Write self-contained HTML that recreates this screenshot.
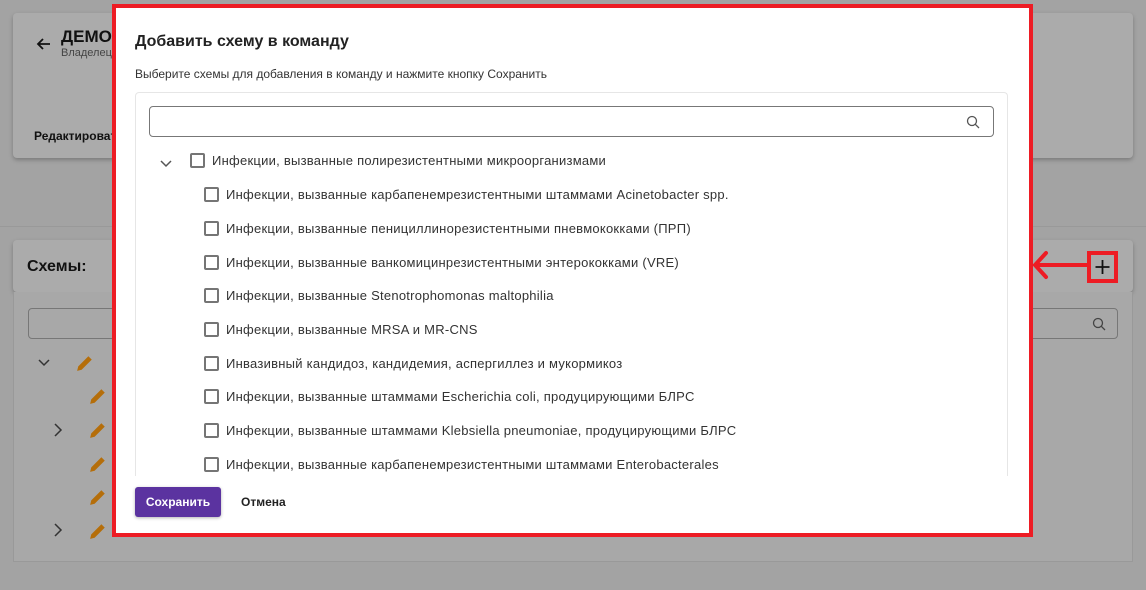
<!DOCTYPE html>
<html><head><meta charset="utf-8"><style>
*{box-sizing:border-box;margin:0;padding:0}
body{width:1146px;height:590px;overflow:hidden;background:#a3a3a3;font-family:"Liberation Sans",Roboto,sans-serif;position:relative;color:#222}
.abs{position:absolute}
.card{background:#ababab;border-radius:4px;box-shadow:0 2px 4px rgba(0,0,0,.25)}
.modal{left:112px;top:4px;width:921px;height:533px;background:#fff;border:4px solid #ed1c24}
.cb{position:absolute;width:15px;height:15px;border:2px solid #757575;border-radius:2px;background:#fff}
.it{position:absolute;font-size:13px;letter-spacing:.25px;color:#333;white-space:nowrap}
.pen{position:absolute;width:18px;height:18px}
</style></head><body>
<div class="abs" style="left:0;top:226px;width:1146px;height:1px;background:#999"></div>
<div class="abs card" style="left:13px;top:13px;width:1120px;height:145px"></div>
<svg class="abs" style="left:35px;top:35px" width="18" height="18" viewBox="0 0 18 18"><path d="M15 9H3M8 4L3 9l5 5" stroke="#111" stroke-width="1.8" fill="none"/></svg>
<div class="abs" style="left:61px;top:27px;font-size:17px;font-weight:bold;color:#111">ДЕМО</div>
<div class="abs" style="left:61px;top:47px;font-size:11px;color:#444">Владелец</div>
<div class="abs" style="left:34px;top:129px;font-size:12px;font-weight:bold;color:#111">Редактировать</div>
<div class="abs card" style="left:13px;top:240px;width:1120px;height:52px"></div>
<div class="abs" style="left:27px;top:258px;font-size:16px;font-weight:bold;color:#111">Схемы:</div>
<div class="abs" style="left:13px;top:292px;width:1120px;height:270px;border:1px solid #999;border-top:none;background:#a8a8a8"></div>
<div class="abs" style="left:28px;top:308px;width:1090px;height:31px;border:1px solid #777;border-radius:4px"></div>
<svg class="abs" style="left:1092px;top:317px" width="14" height="14" viewBox="0 0 14 14"><circle cx="6" cy="6" r="4.5" stroke="#444" stroke-width="1.3" fill="none"/><path d="M9.3 9.3L13 13" stroke="#444" stroke-width="1.3"/></svg>
<svg class="abs" style="left:37px;top:357px" width="14" height="12"><path d="M2 3l5 5 5-5" stroke="#333" stroke-width="1.5" fill="none"/></svg>
<svg class="abs" style="left:52px;top:422px" width="12" height="16"><path d="M3 2l6 6-6 6" stroke="#333" stroke-width="1.5" fill="none"/></svg>
<svg class="abs" style="left:52px;top:522px" width="12" height="16"><path d="M3 2l6 6-6 6" stroke="#333" stroke-width="1.5" fill="none"/></svg>
<svg class="pen" style="left:76px;top:354px" viewBox="0 0 16 16"><path d="M1 15l1-4 9-9 3 3-9 9z" fill="#b56e0a"/></svg>
<svg class="pen" style="left:89px;top:387px" viewBox="0 0 16 16"><path d="M1 15l1-4 9-9 3 3-9 9z" fill="#b56e0a"/></svg>
<svg class="pen" style="left:89px;top:421px" viewBox="0 0 16 16"><path d="M1 15l1-4 9-9 3 3-9 9z" fill="#b56e0a"/></svg>
<svg class="pen" style="left:89px;top:455px" viewBox="0 0 16 16"><path d="M1 15l1-4 9-9 3 3-9 9z" fill="#b56e0a"/></svg>
<svg class="pen" style="left:89px;top:488px" viewBox="0 0 16 16"><path d="M1 15l1-4 9-9 3 3-9 9z" fill="#b56e0a"/></svg>
<svg class="pen" style="left:89px;top:522px" viewBox="0 0 16 16"><path d="M1 15l1-4 9-9 3 3-9 9z" fill="#b56e0a"/></svg>
<div class="abs" style="left:1087px;top:251px;width:31px;height:32px;border:4px solid #ed1c24"></div>
<svg class="abs" style="left:1095px;top:259px" width="15" height="16"><path d="M7.5 1v14M0.5 8h14" stroke="#111" stroke-width="1.8"/></svg>
<div class="abs" style="left:1035px;top:263px;width:52px;height:4px;background:#ed1c24"></div>
<svg class="abs" style="left:1030px;top:250px" width="20" height="30"><path d="M16 3L5 15l11 12" stroke="#ed1c24" stroke-width="4" fill="none" stroke-linecap="round"/></svg>

<div class="abs modal">
<div class="abs" style="left:19px;top:25px;font-size:16px;font-weight:bold;color:#222">Добавить схему в команду</div>
<div class="abs" style="left:19px;top:59px;font-size:12px;color:#333">Выберите схемы для добавления в команду и нажмите кнопку Сохранить</div>
<div class="abs" style="left:19px;top:84px;width:873px;height:388px;border:1px solid #e6e6e6;border-bottom:none;border-radius:4px 4px 0 0"></div>
<div class="abs" style="left:33px;top:98px;width:845px;height:31px;border:1px solid #777;border-radius:4px"></div>
<svg class="abs" style="left:850px;top:107px" width="14" height="14" viewBox="0 0 14 14"><circle cx="6" cy="6" r="4.5" stroke="#555" stroke-width="1.3" fill="none"/><path d="M9.3 9.3L13 13" stroke="#555" stroke-width="1.3"/></svg>
<svg class="abs" style="left:43px;top:150px" width="14" height="12"><path d="M2 3l5 5 5-5" stroke="#555" stroke-width="1.5" fill="none"/></svg>
<div class="cb" style="left:74px;top:145px"></div><div class="it" style="left:96px;top:145px">Инфекции, вызванные полирезистентными микроорганизмами</div>
<div class="cb" style="left:88px;top:179px"></div><div class="it" style="left:110px;top:179px">Инфекции, вызванные карбапенемрезистентными штаммами Acinetobacter spp.</div>
<div class="cb" style="left:88px;top:213px"></div><div class="it" style="left:110px;top:213px">Инфекции, вызванные пенициллинорезистентными пневмококками (ПРП)</div>
<div class="cb" style="left:88px;top:247px"></div><div class="it" style="left:110px;top:247px">Инфекции, вызванные ванкомицинрезистентными энтерококками (VRE)</div>
<div class="cb" style="left:88px;top:280px"></div><div class="it" style="left:110px;top:280px">Инфекции, вызванные Stenotrophomonas maltophilia</div>
<div class="cb" style="left:88px;top:314px"></div><div class="it" style="left:110px;top:314px">Инфекции, вызванные MRSA и MR-CNS</div>
<div class="cb" style="left:88px;top:348px"></div><div class="it" style="left:110px;top:348px">Инвазивный кандидоз, кандидемия, аспергиллез и мукормикоз</div>
<div class="cb" style="left:88px;top:381px"></div><div class="it" style="left:110px;top:381px">Инфекции, вызванные штаммами Escherichia coli, продуцирующими БЛРС</div>
<div class="cb" style="left:88px;top:415px"></div><div class="it" style="left:110px;top:415px">Инфекции, вызванные штаммами Klebsiella pneumoniae, продуцирующими БЛРС</div>
<div class="cb" style="left:88px;top:449px"></div><div class="it" style="left:110px;top:449px">Инфекции, вызванные карбапенемрезистентными штаммами Enterobacterales</div>
<div class="abs" style="left:19px;top:468px;width:880px;height:54px;background:#fff"></div>
<div class="abs" style="left:19px;top:479px;width:86px;height:30px;background:#5b33a0;border-radius:3px;box-shadow:0 1px 3px rgba(0,0,0,.3);color:#fff;font-size:12px;font-weight:bold;text-align:center;line-height:30px">Сохранить</div>
<div class="abs" style="left:125px;top:487px;font-size:12px;font-weight:bold;color:#222">Отмена</div>
</div>
</body></html>
